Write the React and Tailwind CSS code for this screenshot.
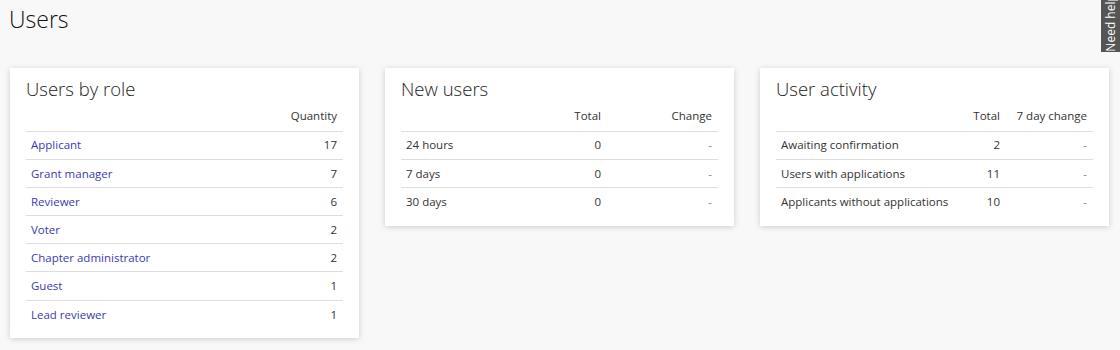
import React from 'react';

const roles = [
  ['Applicant', 17],
  ['Grant manager', 7],
  ['Reviewer', 6],
  ['Voter', 2],
  ['Chapter administrator', 2],
  ['Guest', 1],
  ['Lead reviewer', 1],
];

const newUsers = [
  ['24 hours', 0, '-'],
  ['7 days', 0, '-'],
  ['30 days', 0, '-'],
];

const activity = [
  ['Awaiting confirmation', 2, '-'],
  ['Users with applications', 11, '-'],
  ['Applicants without applications', 10, '-'],
];

const Card = ({ title, children }) => (
  <div className="w-[349px] bg-white shadow-[0_1px_6px_rgba(0,0,0,0.18)] px-4 pt-[8px] pb-[10px]">
    <h2 className="text-[18.5px] font-light leading-[26px] text-[#222]">{title}</h2>
    <table className="w-full text-[11.5px] text-[#333] border-collapse">
      {children}
    </table>
  </div>
);

const Head = ({ cols }) => (
  <thead>
    <tr className="border-b border-[#dedede]">
      {cols.map((c, i) => (
        <th
          key={i}
          className={`font-normal h-[29px] pb-[6px] align-bottom ${i === 0 ? 'text-left pl-[5px]' : 'text-right pr-[6px]'}`}
        >
          {c}
        </th>
      ))}
    </tr>
  </thead>
);

export default function App() {
  return (
    <div
      className="min-h-[350px] bg-[#f8f8f8] relative"
      style={{ fontFamily: '"Open Sans", sans-serif' }}
    >
      <h1 className="text-[23px] font-light leading-[36px] text-[#111] pl-[9px] pt-[1px]">Users</h1>

      <div className="flex items-start gap-[26px] pl-[10px] pt-[31px]">
        <Card title="Users by role">
          <Head cols={['', 'Quantity']} />
          <tbody>
            {roles.map(([name, qty], i) => (
              <tr key={name} className={i < roles.length - 1 ? 'border-b border-[#dedede]' : ''}>
                <td className="h-[28.2px] pl-[5px]">
                  <a href="#" className="text-[#3a3ab5]">{name}</a>
                </td>
                <td className="h-[28.2px] pr-[6px] text-right text-[#333]">{qty}</td>
              </tr>
            ))}
          </tbody>
        </Card>

        <Card title="New users">
          <Head cols={['', 'Total', 'Change']} />
          <tbody>
            {newUsers.map(([name, total, change], i) => (
              <tr key={name} className={i < newUsers.length - 1 ? 'border-b border-[#dedede]' : ''}>
                <td className="h-[28.2px] pl-[5px]">{name}</td>
                <td className="h-[28.2px] pr-[6px] text-right">{total}</td>
                <td className="h-[28.2px] pr-[6px] text-right w-[111px] text-[#888]">{change}</td>
              </tr>
            ))}
          </tbody>
        </Card>

        <Card title="User activity">
          <Head cols={['', 'Total', '7 day change']} />
          <tbody>
            {activity.map(([name, total, change], i) => (
              <tr key={name} className={i < activity.length - 1 ? 'border-b border-[#dedede]' : ''}>
                <td className="h-[28.2px] pl-[5px]">{name}</td>
                <td className="h-[28.2px] pr-[6px] text-right">{total}</td>
                <td className="h-[28.2px] pr-[6px] text-right w-[87px] text-[#888]">{change}</td>
              </tr>
            ))}
          </tbody>
        </Card>
      </div>

      <div className="absolute top-0 right-0 w-[19px] h-[52px] bg-[#555] overflow-hidden flex items-end justify-center">
        <span className="text-white text-[12px] whitespace-nowrap [writing-mode:vertical-rl] rotate-180 pb-[4px] leading-[19px]">
          Need help?
        </span>
      </div>
    </div>
  );
}
